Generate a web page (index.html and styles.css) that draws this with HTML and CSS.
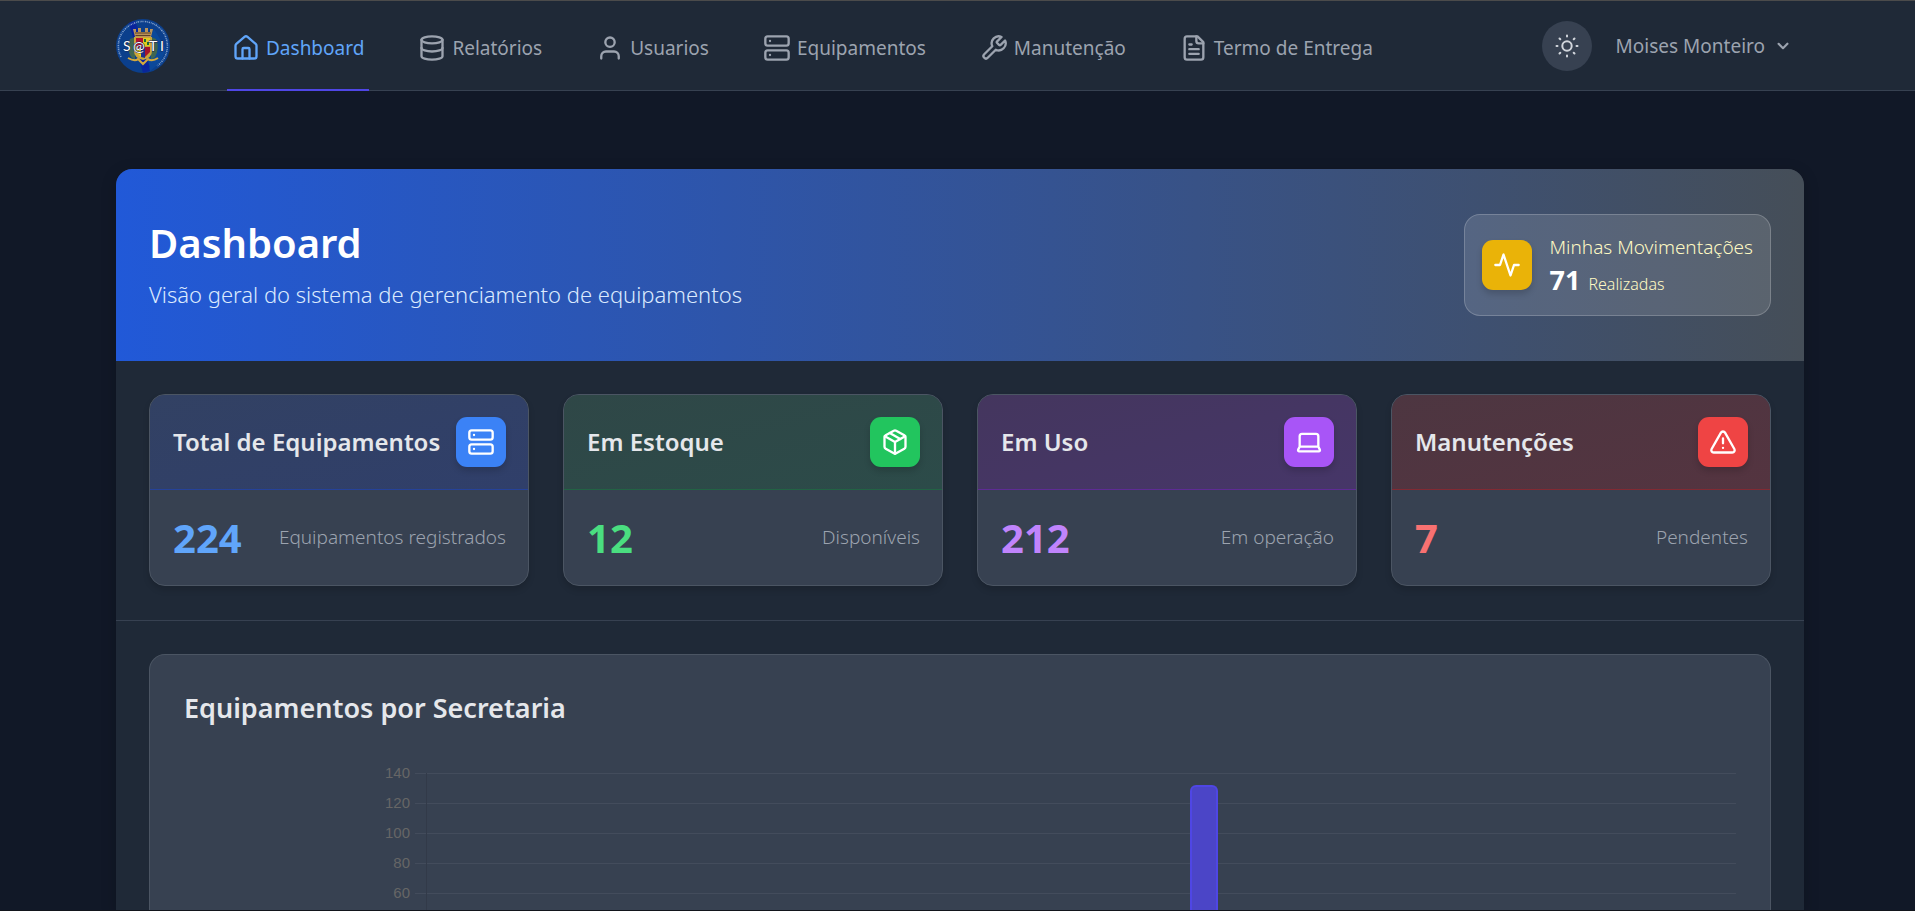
FILE: index.html
```html
<!DOCTYPE html>
<html lang="pt-BR">
<head>
<meta charset="utf-8">
<meta name="viewport" content="width=device-width, initial-scale=1">
<title>Dashboard</title>
<link rel="stylesheet" href="styles.css">
</head>
<body>
<header class="topbar">
  <a class="logo" href="#" aria-label="Início">
    <svg viewBox="0 0 54 54" width="54" height="54">
      <circle cx="27" cy="27" r="27" fill="#0b3f8c"/>
      <path d="M13 4 19 2 28 24 34 52 27 54Z" fill="#0a1fa0" opacity=".75"/>
      <path d="M38 10 50 30 44 44 34 52 30 30Z" fill="#0c4da0" opacity=".7"/>
      <path d="M5 38A24.500 24.500 0 1 1 41 47" fill="none" stroke="#a9c0e0" stroke-width="1.6" stroke-dasharray="1.3 .9 .7 .8" opacity=".75"/>
      <path d="M14 8 18 6 34 48 28 49Z" fill="#0a1fa0" opacity=".6"/>
      <path d="M14 20q-4 9 1 18l4 3V18Z" fill="#3f6650"/>
      <path d="M40 20q4 9-1 18l-4 3V18Z" fill="#3f6650"/>
      <path d="M17 10h3v3h2V9h3v4h4V9h3v4h2v-3h3l-2 8H19Z" fill="#b8935a"/>
      <path d="M19 14h16M19.500 16.500h15" stroke="#5d4228" fill="none"/>
      <path d="M18 18h18v14q0 7-9 9-9-2-9-9Z" fill="#c9a53a"/>
      <path d="M20 19h7v10h-7Z" fill="#b5122c"/>
      <path d="M27 19h7v8h-7Z" fill="#e3ca1e"/>
      <path d="M28 20h2v3h-2ZM31 23h2v3h-2Z" fill="#1a6b35"/>
      <path d="M20 29h5v9l-5-5Z" fill="#f0d51c"/>
      <path d="M25 28h4v11l-4-1Z" fill="#1c2f8c"/>
      <path d="M29 28h5v5l-5 5Z" fill="#a5142c"/>
      <path d="M12 39q7 4 10 1l5 5 5-5q4 3 10-1" stroke="#d4a93c" stroke-width="2" fill="none"/>
      <g class="logo-text">
        <text x="7" y="32">S</text><text x="17" y="32">@</text><text x="33" y="32">T</text><text x="44" y="32">I</text>
      </g>
    </svg>
  </a>
  <nav class="menu" aria-label="Principal">
    <a class="menu-link active" href="#" aria-current="page">
      <svg class="icon" viewBox="0 0 24 24"><path d="M15 21v-8a1 1 0 0 0-1-1h-4a1 1 0 0 0-1 1v8"/><path d="M3 10a2 2 0 0 1 .709-1.528l7-5.999a2 2 0 0 1 2.582 0l7 5.999A2 2 0 0 1 21 10v9a2 2 0 0 1-2 2H5a2 2 0 0 1-2-2z"/></svg>
      <span>Dashboard</span></a>
    <a class="menu-link" href="#">
      <svg class="icon" viewBox="0 0 24 24"><ellipse cx="12" cy="5" rx="9" ry="3"/><path d="M3 5v14a9 3 0 0 0 18 0V5"/><path d="M3 12a9 3 0 0 0 18 0"/></svg>
      <span>Relatórios</span></a>
    <a class="menu-link" href="#">
      <svg class="icon" viewBox="0 0 24 24"><path d="M19.500 21v-2a4 4 0 0 0-4-4h-7a4 4 0 0 0-4 4v2"/><circle cx="12" cy="7" r="4"/></svg>
      <span>Usuarios</span></a>
    <a class="menu-link" href="#">
      <svg class="icon" viewBox="0 0 24 24"><rect x="2" y="2" width="20" height="8" rx="2"/><rect x="2" y="14" width="20" height="8" rx="2"/><path d="M6 6h.01M6 18h.01"/></svg>
      <span>Equipamentos</span></a>
    <a class="menu-link" href="#">
      <svg class="icon" viewBox="0 0 24 24"><path d="M14.700 6.300a1 1 0 0 0 0 1.400l1.600 1.600a1 1 0 0 0 1.400 0l3.770-3.770a6 6 0 0 1-7.940 7.940l-6.910 6.910a2.120 2.120 0 0 1-3-3l6.910-6.910a6 6 0 0 1 7.940-7.940l-3.760 3.760z"/></svg>
      <span>Manutenção</span></a>
    <a class="menu-link" href="#">
      <svg class="icon" viewBox="0 0 24 24"><path d="M15 2H6a2 2 0 0 0-2 2v16a2 2 0 0 0 2 2h12a2 2 0 0 0 2-2V7Z"/><path d="M14 2v4a2 2 0 0 0 2 2h4M10 9H8M16 13H8M16 17H8"/></svg>
      <span>Termo de Entrega</span></a>
  </nav>
  <div class="account">
    <button class="theme" type="button" aria-label="Alternar tema">
      <svg class="icon" viewBox="0 0 24 24"><circle cx="12" cy="12" r="4.700"/><path d="M12 1.500v1M12 21.500v1M4.500 4.500l.8.8M18.700 18.700l.8.8M1.500 12h1M21.500 12h1M5.300 18.700l-.8.8M19.500 4.500l-.8.8"/></svg>
    </button>
    <button class="user" type="button" aria-haspopup="menu">
      <span>Moises Monteiro</span>
      <svg class="chevron" viewBox="0 0 20 20"><path d="M5.293 7.293a1 1 0 011.414 0L10 10.586l3.293-3.293a1 1 0 111.414 1.414l-4 4a1 1 0 01-1.414 0l-4-4a1 1 0 010-1.414z"/></svg>
    </button>
  </div>
</header>

<main class="page">
  <div class="panel">
    <section class="hero">
      <div>
        <h1 class="hero-title">Dashboard</h1>
        <p class="hero-text">Visão geral do sistema de gerenciamento de equipamentos</p>
      </div>
      <div class="moves">
        <span class="badge yellow"><svg class="icon" viewBox="0 0 24 24"><path d="M22 12h-4l-3 9L9 3l-3 9H2"/></svg></span>
        <div>
          <p class="moves-label">Minhas Movimentações</p>
          <p class="moves-value"><strong>71</strong> <span>Realizadas</span></p>
        </div>
      </div>
    </section>

    <section class="stats">
      <article class="stat blue">
        <div class="stat-head"><h2>Total de Equipamentos</h2>
          <span class="badge"><svg class="icon" viewBox="0 0 24 24"><rect x="2" y="2" width="20" height="8" rx="2"/><rect x="2" y="14" width="20" height="8" rx="2"/><path d="M6 6h.01M6 18h.01"/></svg></span></div>
        <div class="stat-body"><strong>224</strong><span>Equipamentos registrados</span></div>
      </article>
      <article class="stat green">
        <div class="stat-head"><h2>Em Estoque</h2>
          <span class="badge"><svg class="icon" viewBox="0 0 24 24"><path d="m7.500 4.270 9 5.150"/><path d="M21 8a2 2 0 0 0-1-1.730l-7-4a2 2 0 0 0-2 0l-7 4A2 2 0 0 0 3 8v8a2 2 0 0 0 1 1.730l7 4a2 2 0 0 0 2 0l7-4A2 2 0 0 0 21 16Z"/><path d="m3.300 7 8.700 5 8.700-5M12 22V12"/></svg></span></div>
        <div class="stat-body"><strong>12</strong><span>Disponíveis</span></div>
      </article>
      <article class="stat purple">
        <div class="stat-head"><h2>Em Uso</h2>
          <span class="badge"><svg class="icon" viewBox="0 0 24 24"><path d="M20 16V7a2 2 0 0 0-2-2H6a2 2 0 0 0-2 2v9m16 0H4m16 0 1.280 2.550a1 1 0 0 1-.9 1.450H3.620a1 1 0 0 1-.9-1.450L4 16"/></svg></span></div>
        <div class="stat-body"><strong>212</strong><span>Em operação</span></div>
      </article>
      <article class="stat red">
        <div class="stat-head"><h2>Manutenções</h2>
          <span class="badge"><svg class="icon" viewBox="0 0 24 24"><path d="m21.730 18-8-14a2 2 0 0 0-3.480 0l-8 14A2 2 0 0 0 4 21h16a2 2 0 0 0 1.730-3ZM12 9v4M12 17h.01"/></svg></span></div>
        <div class="stat-body"><strong>7</strong><span>Pendentes</span></div>
      </article>
    </section>

    <section class="reports">
      <div class="chart-card">
        <h2 class="chart-title">Equipamentos por Secretaria</h2>
        <div class="chart">
          <div class="scale">
            <span>140</span><span>120</span><span>100</span><span>80</span><span>60</span>
          </div>
          <div class="plot">
            <i class="rule"></i><i class="rule"></i><i class="rule"></i><i class="rule"></i><i class="rule"></i>
            <i class="axis"></i>
            <i class="bar" style="left: 58.7%"></i>
          </div>
        </div>
      </div>
    </section>
  </div>
</main>
</body>
</html>
```
FILE: styles.css
```css
* { box-sizing: border-box; }

body {
  margin: 0;
  height: 100vh;
  overflow: hidden;
  display: flex;
  flex-direction: column;
  border-top: 1px solid #4b4b4b;
  border-bottom: 1px solid #12151b;
  background: #111827;
  color: #e5e7eb;
  font-family: "Noto Sans", "Open Sans", sans-serif;
  font-size: 19px;
}

h1, h2, p { margin: 0; }
h1, h2 { font-weight: 600; }
a { color: inherit; text-decoration: none; }

button {
  border: 0;
  background: none;
  color: inherit;
  font: inherit;
  padding: 0;
  cursor: pointer;
}

.icon {
  width: 28px;
  height: 28px;
  flex: none;
  fill: none;
  stroke: currentColor;
  stroke-width: 2;
  stroke-linecap: round;
  stroke-linejoin: round;
}

/* Top bar */
.topbar {
  flex: none;
  display: flex;
  align-items: center;
  height: 90px;
  padding: 0 121px 0 116px;
  background: #1f2937;
  border-bottom: 1px solid #374151;
  color: #9ca3af;
}

.logo { display: flex; margin-right: 57px; }

.logo-text {
  fill: #fff;
  stroke: #1c2550;
  stroke-width: 1px;
  paint-order: stroke;
  font-family: Lato, sans-serif;
  font-size: 14px;
}

.menu { display: flex; align-self: stretch; gap: 44px; margin-bottom: -1px; }

.menu-link {
  display: flex;
  align-items: center;
  gap: 6px;
  padding: 6px 5px 0;
  border-bottom: 2px solid transparent;
  white-space: nowrap;
}

.menu-link.active { color: #60a5fa; border-color: #4f46e5; }

.account { display: flex; align-items: center; gap: 24px; margin-left: auto; }

.theme {
  display: grid;
  place-items: center;
  width: 50px;
  height: 50px;
  border-radius: 50%;
  background: #374151;
  color: #d1d5db;
}

.theme .icon { width: 24px; height: 24px; }

.user { display: flex; align-items: center; gap: 7px; white-space: nowrap; }
.chevron { width: 22px; height: 22px; fill: currentColor; }

/* Main panel */
.page {
  flex: 1;
  min-height: 0;
  display: flex;
  flex-direction: column;
  padding: 78px 111px 0 116px;
}

.panel {
  flex: 1;
  min-height: 0;
  display: flex;
  flex-direction: column;
  overflow: hidden;
  border-radius: 16px 16px 0 0;
  background: #1f2937;
  box-shadow: 0 4px 16px rgba(0, 0, 0, .2);
}

.hero {
  flex: none;
  display: flex;
  align-items: center;
  justify-content: space-between;
  padding: 45px 33px;
  background: linear-gradient(90deg, #2159d8, #454e58);
}

.hero-title { font-size: 40px; line-height: 46px; color: #fff; }

.hero-text {
  margin-top: 12px;
  font-size: 22px;
  font-weight: 300;
  line-height: 32px;
  color: #dbeafe;
}

.moves {
  display: flex;
  align-items: center;
  gap: 17px;
  padding: 17px;
  border: 1px solid rgba(255, 255, 255, .2);
  border-radius: 16px;
  background: rgba(255, 255, 255, .12);
  color: #fef9c3;
  font-weight: 300;
}

.moves-label { line-height: 30px; }

.moves-value {
  display: flex;
  align-items: baseline;
  gap: 8px;
  height: 36px;
  line-height: 36px;
  font-size: 16px;
}

.moves-value strong { font-size: 27px; font-weight: 700; color: #fff; }

.badge {
  flex: none;
  display: grid;
  place-items: center;
  width: 50px;
  height: 50px;
  border-radius: 11px;
  background: var(--solid);
  color: #fff;
  box-shadow: 0 4px 6px rgba(0, 0, 0, .16);
}

.yellow { --solid: #eab308; }

/* Stat cards */
.stats {
  flex: none;
  display: grid;
  grid-template-columns: repeat(4, 1fr);
  gap: 34px;
  padding: 33px 33px 34px;
  border-bottom: 1px solid #374151;
}

.stat {
  overflow: hidden;
  border: 1px solid #4b5563;
  border-radius: 16px;
  background: #374151;
  box-shadow: 0 4px 6px rgba(0, 0, 0, .14);
}

.blue { --solid: #3b82f6; --bright: #60a5fa; --from: #324163; --to: #303f6a; --line: #25429a; }
.green { --solid: #22c55e; --bright: #4ade80; --from: #2f4747; --to: #2c4b49; --line: #226344; }
.purple { --solid: #a855f7; --bright: #c084fc; --from: #44365e; --to: #463668; --line: #5e2b95; }
.red { --solid: #ef4444; --bright: #f87171; --from: #4d3641; --to: #543440; --line: #822a33; }

.stat-head {
  display: flex;
  align-items: center;
  justify-content: space-between;
  padding: 22px 22px 22px 23px;
  border-bottom: 1px solid var(--line);
  background: linear-gradient(to bottom right, var(--from), var(--to));
}

.stat-head h2 { font-size: 24px; line-height: 32px; white-space: nowrap; }

.stat-body {
  display: flex;
  align-items: center;
  justify-content: space-between;
  padding: 22px 22px 22px 23px;
  line-height: 51px;
}

.stat-body strong { font-size: 40px; color: var(--bright); }
.stat-body span { font-weight: 300; color: #9ca3af; }

/* Chart */
.reports {
  flex: 1;
  min-height: 0;
  display: flex;
  padding: 33px 33px 0;
}

.chart-card {
  flex: 1;
  padding: 35px 34px 0;
  border: 1px solid #4b5563;
  border-bottom: 0;
  border-radius: 16px 16px 0 0;
  background: #374151;
}

.chart-title { font-size: 27px; line-height: 36px; }

.chart {
  display: grid;
  grid-template-columns: 226px 1fr;
  column-gap: 5px;
  margin-top: 32px;
}

.scale {
  display: grid;
  grid-auto-rows: 30px;
  align-items: center;
  justify-items: end;
  font-family: "Liberation Sans", Arial, sans-serif;
  font-size: 15px;
  line-height: 30px;
  color: #666;
}

.plot {
  position: relative;
  display: grid;
  grid-auto-rows: 30px;
  align-items: center;
}

.rule { height: 1px; background: #434c5c; }

.axis {
  position: absolute;
  top: 15px;
  bottom: -18px;
  left: 11px;
  width: 1px;
  background: #323a49;
}

.bar {
  position: absolute;
  top: 27px;
  bottom: -18px;
  width: 28px;
  border: 2px solid #4f46e5;
  border-bottom: 0;
  border-radius: 6px 6px 0 0;
  background: #4b45c7;
}
```
